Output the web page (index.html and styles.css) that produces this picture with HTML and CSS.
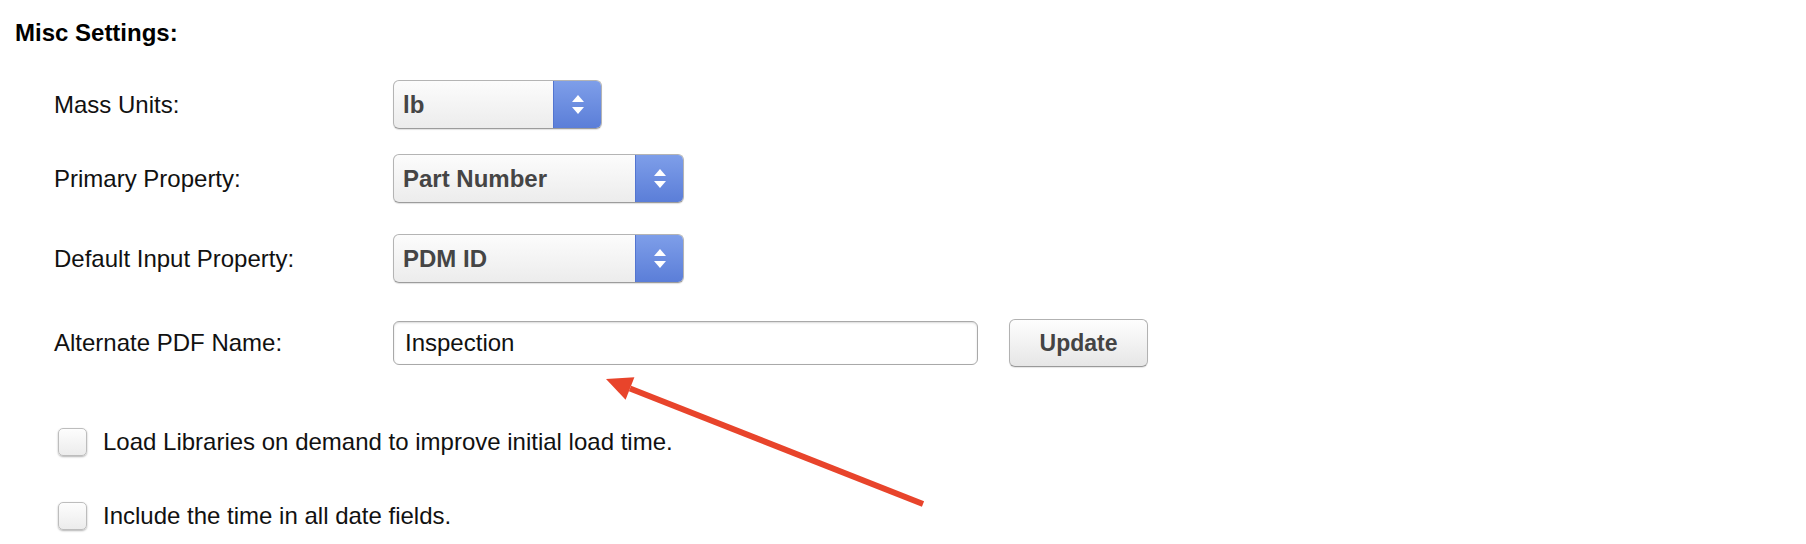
FILE: index.html
```html
<!DOCTYPE html>
<html lang="en">
<head>
  <meta charset="UTF-8" />
  <title>Misc Settings</title>
  <link rel="stylesheet" href="styles.css">
</head>
<body>

  <div class="page">
    <h2 class="section-title">Misc Settings:</h2>

    <!-- Dropdown / text settings -->
    <div class="settings">
      <div class="row">
        <label class="row-label">Mass Units:</label>
        <div class="select select-short">
          <span class="select-value">lb</span>
          <span class="select-arrows"><i class="tri-up"></i><i class="tri-down"></i></span>
        </div>
      </div>

      <div class="row row-gap-sm">
        <label class="row-label">Primary Property:</label>
        <div class="select">
          <span class="select-value">Part Number</span>
          <span class="select-arrows"><i class="tri-up"></i><i class="tri-down"></i></span>
        </div>
      </div>

      <div class="row row-gap-md">
        <label class="row-label">Default Input Property:</label>
        <div class="select">
          <span class="select-value">PDM ID</span>
          <span class="select-arrows"><i class="tri-up"></i><i class="tri-down"></i></span>
        </div>
      </div>

      <div class="row row-gap-lg row-text">
        <label class="row-label" for="pdfName">Alternate PDF Name:</label>
        <input type="text" id="pdfName" class="text-input" value="Inspection">
        <button class="btn">Update</button>
      </div>
    </div>

    <!-- Checkbox options -->
    <div class="options">
      <label class="check"><span class="checkbox"></span>Load Libraries on demand to improve initial load time.</label>
      <label class="check"><span class="checkbox"></span>Include the time in all date fields.</label>
    </div>

    <!-- Annotation arrow -->
    <svg class="annotation" width="1806" height="544" viewBox="0 0 1806 544">
      <line x1="630" y1="388.5" x2="923" y2="504" stroke="#e8442b" stroke-width="6" />
      <polygon points="606,379 634.4,377.3 625.6,399.7" fill="#e8442b" />
    </svg>
  </div>

</body>
</html>
```

FILE: styles.css
```css
body, html {
  margin: 0;
  padding: 0;
  background: #fff;
}

.page {
  position: relative;
  padding: 20px 0 0 15px;
  height: 524px;
  font-family: "Liberation Sans", Arial, sans-serif;
  color: #111;
}

.section-title {
  margin: 0;
  font-size: 24px;
  line-height: 26px;
  font-weight: bold;
  color: #000;
}

.settings {
  margin-top: 34px;
  padding-left: 39px;
}

.row {
  display: flex;
  align-items: center;
  height: 49px;
}

.row-gap-sm { margin-top: 25px; }
.row-gap-md { margin-top: 31px; }
.row-gap-lg { margin-top: 36px; height: 48px; }

.row-label {
  width: 339px;
  flex-shrink: 0;
  font-size: 24px;
  color: #111;
}

/* mac style popup */
.select {
  display: flex;
  width: 291px;
  height: 49px;
  box-sizing: border-box;
  border: 1px solid #b4b4b4;
  border-bottom-color: #9c9c9c;
  border-radius: 6px;
  background: linear-gradient(#fcfcfc, #ececec);
  box-shadow: 0 1px 1px rgba(0, 0, 0, 0.12);
  overflow: hidden;
}

.select-short {
  width: 209px;
}

.select-value {
  flex: 1;
  padding-left: 9px;
  font-size: 24px;
  font-weight: bold;
  color: #454545;
  line-height: 47px;
}

.select-arrows {
  width: 47px;
  display: flex;
  flex-direction: column;
  align-items: center;
  justify-content: center;
  gap: 5px;
  background: linear-gradient(#7e9ee9, #5b7ed8);
  border-left: 1px solid #5375d0;
}

.tri-up, .tri-down {
  width: 0;
  height: 0;
  border-left: 6px solid transparent;
  border-right: 6px solid transparent;
}

.tri-up { border-bottom: 7px solid #fff; }
.tri-down { border-top: 7px solid #fff; }

.text-input {
  width: 585px;
  height: 44px;
  box-sizing: border-box;
  margin: 0;
  padding: 0 11px;
  border: 1px solid #a9a9a9;
  border-radius: 6px;
  box-shadow: inset 0 1px 2px rgba(0, 0, 0, 0.15);
  font-family: "Liberation Sans", Arial, sans-serif;
  font-size: 24px;
  color: #111;
  outline: none;
}

.btn {
  margin-left: 31px;
  width: 139px;
  height: 48px;
  border: 1px solid #b2b2b2;
  border-bottom-color: #999;
  border-radius: 6px;
  background: linear-gradient(#fefefe, #e6e6e6);
  box-shadow: 0 1px 1px rgba(0, 0, 0, 0.1);
  font-family: "Liberation Sans", Arial, sans-serif;
  font-size: 23px;
  font-weight: bold;
  color: #444;
  cursor: pointer;
}

.options {
  margin-top: 61px;
  padding-left: 43px;
  display: flex;
  flex-direction: column;
  gap: 46px;
}

.check {
  display: flex;
  align-items: center;
  gap: 16px;
  height: 28px;
  font-size: 24px;
  color: #111;
}

.checkbox {
  width: 29px;
  height: 28px;
  box-sizing: border-box;
  border: 1px solid #bdbdbd;
  border-radius: 5px;
  background: linear-gradient(#fdfdfd, #ececec);
  box-shadow: 0 1px 2px rgba(0, 0, 0, 0.3);
}

.annotation {
  position: absolute;
  top: 0;
  left: 0;
  pointer-events: none;
}
```
